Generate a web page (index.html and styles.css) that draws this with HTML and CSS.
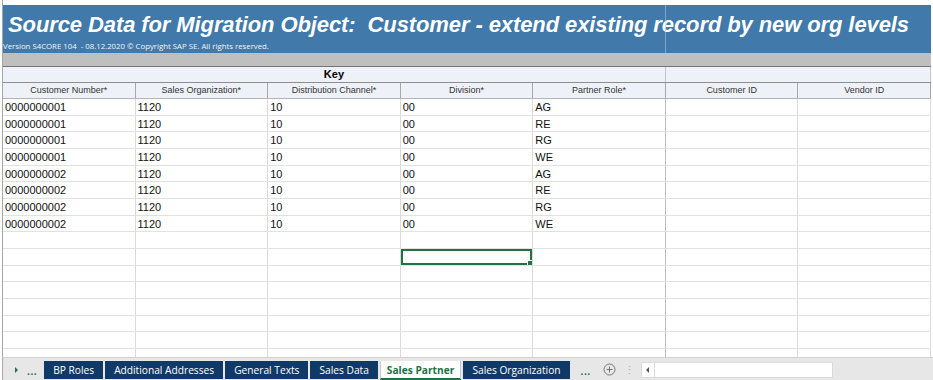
FILE: index.html
```html
<!DOCTYPE html>
<html lang="en">
<head>
<meta charset="UTF-8">
<title>Sales Partner</title>
<link rel="stylesheet" href="styles.css">
</head>
<body>
<div class="sheet">
<div class="title">
<h1>Source Data for Migration Object:&nbsp; Customer - extend existing record by new org levels</h1>
<p class="version">Version S4CORE 104 &nbsp;- 08.12.2020 &copy; Copyright SAP SE. All rights reserved.</p>
</div>
<div class="band"></div>
<div class="row key-row">
<div class="cell span5">Key</div>
<div class="cell span2"></div>
</div>
<div class="row head-row">
<div class="cell">Customer Number*</div>
<div class="cell">Sales Organization*</div>
<div class="cell">Distribution Channel*</div>
<div class="cell">Division*</div>
<div class="cell group-end">Partner Role*</div>
<div class="cell">Customer ID</div>
<div class="cell">Vendor ID</div>
</div>
<div class="rows" id="rows"></div>
<div class="split"></div>
</div>
<div class="tabs">
<span class="nav-arrow"></span>
<span class="more first">...</span>
<span class="tab">BP Roles</span>
<span class="tab">Additional Addresses</span>
<span class="tab">General Texts</span>
<span class="tab">Sales Data</span>
<span class="tab active">Sales Partner</span>
<span class="tab">Sales Organization</span>
<span class="more">...</span>
<span class="add">
<svg width="13" height="13" viewBox="0 0 13 13"><circle cx="6.5" cy="6.5" r="5.5" fill="none" stroke="#777" stroke-width="1"/><path d="M6.5 3.5v6M3.5 6.5h6" stroke="#777" stroke-width="1"/></svg>
</span>
<span class="grip">&#8942;</span>
<div class="hscroll">
<span class="left-btn"></span>
<span class="track"></span>
</div>
</div>
<script>
var data = [
['0000000001', '1120', '10', '00', 'AG'],
['0000000001', '1120', '10', '00', 'RE'],
['0000000001', '1120', '10', '00', 'RG'],
['0000000001', '1120', '10', '00', 'WE'],
['0000000002', '1120', '10', '00', 'AG'],
['0000000002', '1120', '10', '00', 'RE'],
['0000000002', '1120', '10', '00', 'RG'],
['0000000002', '1120', '10', '00', 'WE']
];
var body = document.getElementById('rows');
for (var r = 0; r < 16; r++) {
var row = document.createElement('div');
row.className = 'row data-row';
for (var c = 0; c < 7; c++) {
var cell = document.createElement('div');
cell.className = 'cell';
if (c == 4) cell.className += ' group-end';
if (r == 9 && c == 3) cell.className += ' sel';
if (data[r] && data[r][c]) cell.textContent = data[r][c];
row.appendChild(cell);
}
body.appendChild(row);
}
</script>
</body>
</html>
```
FILE: styles.css
```css
html, body { margin: 0; padding: 0; height: 380px; overflow: hidden; background: #fff; font-family: 'Liberation Sans', Arial, sans-serif; }
.sheet { position: relative; margin: 0 0 0 2px; padding-top: 5px; width: 928px; height: 352px; overflow: hidden; border-left: 1px solid #a6a6a6; }
.title { background: #4079aa; height: 48px; padding-left: 5px; color: #fff; }
.title h1 { margin: 0; padding-top: 7px; font-size: 22px; letter-spacing: -0.1px; line-height: 26px; font-style: italic; font-weight: bold; white-space: nowrap; }
.version { margin: 3px 0 0 -5px; font-family: 'Open Sans', sans-serif; font-size: 7.8px; line-height: 10px; color: #f2f5f9; white-space: nowrap; }
.band { height: 13px; background: #bfbfbf; border-bottom: 1px solid #747474; }
.row { display: grid; grid-template-columns: repeat(7, 1fr); }
.cell { border-right: 1px solid #dadada; overflow: hidden; white-space: nowrap; }
.key-row { height: 15px; background: #eef2f8; border-bottom: 1px solid #8e8e8e; }
.key-row .cell { font-size: 11px; font-weight: bold; text-align: center; line-height: 15px; border-right: 1px solid #c6c6c6; }
.span5 { grid-column: span 5; }
.span2 { grid-column: span 2; }
.head-row { height: 15px; background: #eef2f8; border-bottom: 1px solid #b4b4b4; }
.head-row .cell { font-size: 9px; line-height: 14px; text-align: center; color: #333; border-right: 1px solid #a8a8a8; }
.data-row { height: 16.67px; box-sizing: border-box; border-bottom: 1px solid #e1e1e1; }
.data-row .cell { font-size: 11px; line-height: 16px; padding-left: 2px; color: #111; }
.data-row .group-end { border-right-color: #bdbdbd; }
.sel { position: relative; box-shadow: inset 0 0 0 2px #217346; }
.sel::after { content: ''; position: absolute; right: -1px; bottom: -1px; width: 4px; height: 4px; background: #217346; border: 1px solid #fff; }
.split { position: absolute; left: 662px; top: 5px; width: 1px; height: 48px; background: rgba(190, 200, 210, 0.55); }
.tabs { display: flex; align-items: center; height: 23px; margin-left: 2px; background: #e7e7e7; border-top: 1px solid #d2d2d2; border-left: 1px solid #a6a6a6; font-family: 'Open Sans', sans-serif; font-size: 10.2px; }
.nav-arrow { width: 0; height: 0; margin-left: 12px; border-left: 3px solid #217346; border-top: 3px solid transparent; border-bottom: 3px solid transparent; }
.more { color: #217346; font-weight: bold; margin: 0 4px 0 9px; letter-spacing: 0.5px; line-height: 10px; padding-top: 2px; }
.more.first { margin-right: 7px; }
.tab { height: 18px; line-height: 18px; padding: 0 9px; margin-right: 2px; background: #0f3a68; color: #fff; }
.tab.active { background: #fff; color: #217346; font-weight: bold; height: 19px; margin-top: 1px; box-sizing: border-box; border-bottom: 2px solid #217346; line-height: 18px; border-left: 1px solid #c8c8c8; border-right: 1px solid #c8c8c8; padding: 0 6px; }
.add { margin-left: 8px; height: 13px; }
.grip { margin-left: 8px; color: #b0b0b0; font-size: 11px; }
.hscroll { display: flex; margin-left: 6px; height: 14px; width: 190px; background: #fff; border: 1px solid #dadada; }
.left-btn { width: 12px; border-right: 1px solid #dadada; position: relative; }
.left-btn::before { content: ''; position: absolute; left: 4px; top: 4px; border-right: 3px solid #555; border-top: 3px solid transparent; border-bottom: 3px solid transparent; }
.track { flex: 1; }
```
